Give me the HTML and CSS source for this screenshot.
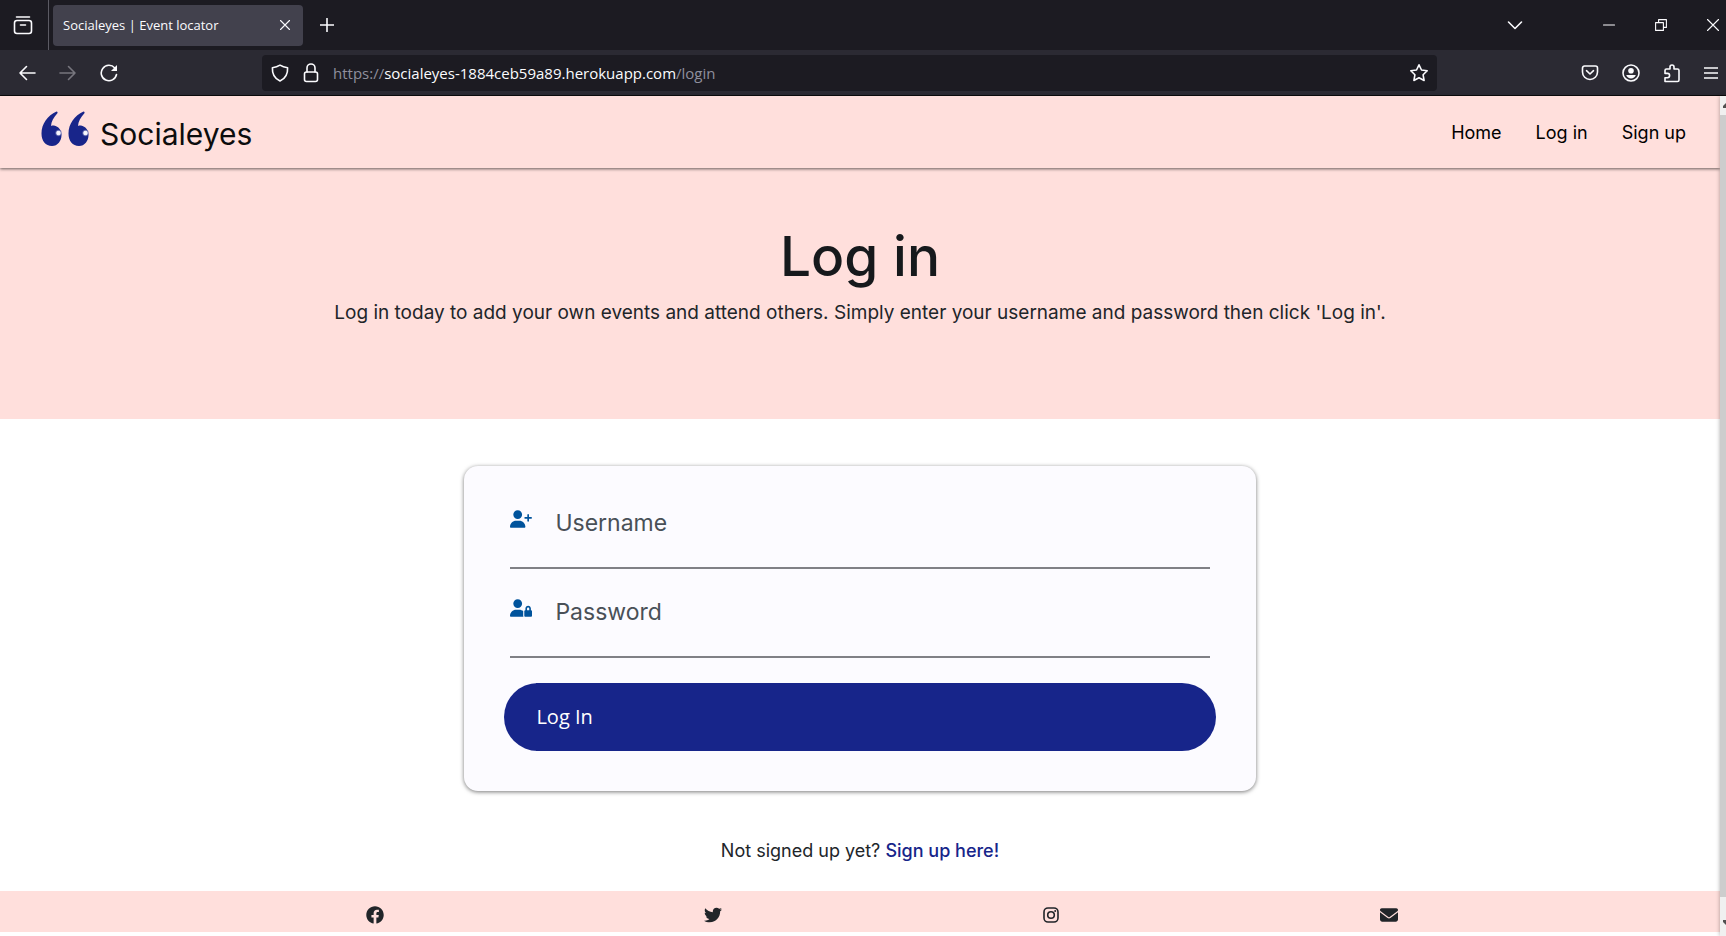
FILE: index.html
```html
<!DOCTYPE html>
<html lang="en">
<head>
<meta charset="utf-8">
<meta name="viewport" content="width=device-width, initial-scale=1">
<title>Socialeyes | Event locator</title>
<link rel="stylesheet" href="styles.css">
</head>
<body>
<div class="browser">
  <div class="tabstrip">
    <button class="chrome-btn view-btn" aria-label="Recent browsing">
      <svg width="20" height="20" viewBox="0 0 20 20"><rect x="1.5" y="5.5" width="17" height="13" rx="2.5"/><path d="M3.5 2h13M7.5 10h5"/></svg>
    </button>
    <div class="tab">
      <span class="tab-title">Socialeyes | Event locator</span>
      <button class="chrome-btn tab-close" aria-label="Close tab"><svg width="12" height="12" viewBox="0 0 12 12"><path class="thin" d="M1.5 1.5l9 9M10.500 1.5l-9 9"/></svg></button>
    </div>
    <button class="chrome-btn new-tab" aria-label="New tab"><svg width="14" height="14" viewBox="0 0 14 14"><path d="M7 .5v13M.5 7h13"/></svg></button>
    <div class="window-tools">
      <button class="chrome-btn list-btn" aria-label="List all tabs"><svg width="16" height="16" viewBox="0 0 16 16"><path d="M1.500 5l6.500 6.500L14.500 5"/></svg></button>
      <button class="chrome-btn win-btn" aria-label="Minimize"><svg width="12" height="12" viewBox="0 0 12 12"><path class="thin" d="M.5 6h11"/></svg></button>
      <button class="chrome-btn win-btn" aria-label="Restore"><svg width="12" height="12" viewBox="0 0 12 12"><path class="thin" d="M.6 3.600h7.800v7.800H.6zM3.600 3.600V.6h7.800v7.800h-3"/></svg></button>
      <button class="chrome-btn win-btn" aria-label="Close window"><svg width="12" height="12" viewBox="0 0 12 12"><path class="thin" d="M.5.5l11 11M11.500.5l-11 11"/></svg></button>
    </div>
  </div>
  <div class="toolbar">
    <div class="nav-tools">
      <button class="chrome-btn" aria-label="Back"><svg width="18" height="18" viewBox="0 0 18 18"><path d="M17 9H2M8.500 2.500L2 9l6.500 6.500"/></svg></button>
      <button class="chrome-btn dim" aria-label="Forward"><svg width="18" height="18" viewBox="0 0 18 18"><path d="M1 9h15M9.500 2.500L16 9l-6.500 6.500"/></svg></button>
      <button class="chrome-btn" aria-label="Reload"><svg width="18" height="18" viewBox="0 0 18 18"><path d="M16.500 10.500A7.700 7.700 0 1 1 14.800 4"/><path class="solid" d="M17 1v6h-6z"/></svg></button>
    </div>
    <div class="urlbar">
      <svg width="18" height="18" viewBox="0 0 18 18"><path d="M9 1.200c2.300 1.500 4.800 2.200 7.600 2.500C16.900 9.500 14.500 14.500 9 17 3.500 14.500 1.100 9.500 1.400 3.700 4.200 3.400 6.700 2.700 9 1.200z"/></svg>
      <svg width="18" height="20" viewBox="0 0 18 20"><rect x="2.500" y="9" width="13" height="9.500" rx="2"/><path d="M5 9V5a4 4 0 0 1 8 0v4"/></svg>
      <div class="url" role="textbox" aria-label="Address" tabindex="0">https://<span class="host">socialeyes-1884ceb59a89.herokuapp.com</span>/login</div>
      <button class="chrome-btn star" aria-label="Bookmark this page"><svg width="20" height="20" viewBox="0 0 20 20"><path d="M10 1.800l2.500 5.200 5.700.8-4.100 4 1 5.700-5.100-2.700-5.100 2.700 1-5.700-4.100-4 5.700-.8z"/></svg></button>
    </div>
    <div class="ext-tools">
      <button class="chrome-btn" aria-label="Save to Pocket"><svg width="18" height="18" viewBox="0 0 18 18"><path d="M3.500 2h11a2 2 0 0 1 2 2V8a7.500 7.500 0 0 1-15 0V4a2 2 0 0 1 2-2zM5.500 6.700L9 10l3.500-3.300"/></svg></button>
      <button class="chrome-btn" aria-label="Account"><svg width="18" height="18" viewBox="0 0 18 18"><circle cx="9" cy="9" r="8"/><circle class="solid" cx="9" cy="6.800" r="2.800"/><path class="solid" d="M4.200 11h9.600c-.7 2.200-2.700 3.500-4.800 3.500S4.900 13.200 4.200 11z"/></svg></button>
      <button class="chrome-btn" aria-label="Extensions"><svg width="18" height="20" viewBox="0 0 18 20"><path d="M2 18.500V14.800h2.400a2 2 0 0 0 0-4.400H2V7.500A1.500 1.500 0 0 1 3.500 6H7V4a2 2 0 0 1 4 0v2h3.500A1.500 1.500 0 0 1 16 7.500v9.500a1.500 1.500 0 0 1-1.500 1.500z"/></svg></button>
      <button class="chrome-btn" aria-label="Menu"><svg width="14" height="14" viewBox="0 0 14 14"><path d="M0 2h14M0 7h14M0 12h14"/></svg></button>
    </div>
  </div>
</div>

<div class="viewport">
  <div class="page">
    <header class="site-header">
      <a class="brand" href="#">
        <svg class="brand-mark" width="48" height="36" viewBox="0 0 48 36" aria-hidden="true">
          <defs><radialGradient id="glint"><stop offset="0" stop-color="#fff"/><stop offset=".45" stop-color="#f0effa"/><stop offset="1" stop-color="#18258a" stop-opacity="0"/></radialGradient></defs>
          <g id="quote"><path fill="#18258a" d="M15.500.5c1.200.3 1.400 1.200.7 2-3.500 4-6 8-6.200 12.500 1.100-.5 2-.6 3-.4 4.500.8 7.500 4.600 7.500 9.400C20.500 30 16.700 35 11 35 4.500 35 .5 30 .5 22.500.5 13 6.500 4.500 15.500.5z"/><circle cx="17.500" cy="22" r="4" fill="url(#glint)"/></g>
          <use href="#quote" x="27"/>
        </svg>
        <span class="brand-name">Socialeyes</span>
      </a>
      <nav class="site-nav"><a href="#">Home</a><a href="#">Log in</a><a href="#">Sign up</a></nav>
    </header>
    <section class="hero">
      <h1>Log in</h1>
      <p>Log in today to add your own events and attend others. Simply enter your username and password then click 'Log in'.</p>
    </section>
    <main class="main">
      <form class="card">
        <div class="field">
          <label for="username" aria-label="Username"><svg width="22" height="18" viewBox="0 0 640 512"><path d="M96 128a128 128 0 1 1 256 0A128 128 0 1 1 96 128zM0 482.300C0 383.800 79.800 304 178.300 304h91.400C368.200 304 448 383.800 448 482.300c0 16.400-13.300 29.700-29.700 29.700H29.700C13.300 512 0 498.700 0 482.300zM504 312V248H440c-13.300 0-24-10.700-24-24s10.700-24 24-24h64V136c0-13.300 10.700-24 24-24s24 10.700 24 24v64h64c13.300 0 24 10.700 24 24s-10.700 24-24 24H552v64c0 13.300-10.700 24-24 24s-24-10.700-24-24z"/></svg></label>
          <input id="username" type="text" placeholder="Username">
        </div>
        <div class="field">
          <label for="password" aria-label="Password"><svg width="22" height="18" viewBox="0 0 640 512"><path d="M224 256A128 128 0 1 0 224 0a128 128 0 1 0 0 256zm-45.700 48C79.800 304 0 383.800 0 482.300C0 498.700 13.300 512 29.700 512H392.600c-5.400-9.400-8.600-20.300-8.600-32V352c0-2.100 .1-4.200 .3-6.300c-31-26-71-41.600-114.600-41.600H178.300zM528 240c17.700 0 32 14.300 32 32v48H496V272c0-17.700 14.300-32 32-32zm-80 32v48c-17.700 0-32 14.300-32 32V480c0 17.700 14.300 32 32 32H608c17.700 0 32-14.300 32-32V352c0-17.700-14.300-32-32-32V272c0-44.200-35.800-80-80-80s-80 35.800-80 80z"/></svg></label>
          <input id="password" type="password" placeholder="Password">
        </div>
        <button class="submit" type="submit">Log In</button>
      </form>
      <p class="signup">Not signed up yet? <a href="#">Sign up here!</a></p>
    </main>
    <footer class="site-footer">
      <a href="#" aria-label="Facebook"><svg width="18" height="18" viewBox="0 0 512 512"><path d="M504 256C504 119 393 8 256 8S8 119 8 256c0 123.780 90.690 226.380 209.250 245V327.690h-63V256h63v-54.640c0-62.150 37-96.480 93.670-96.480 27.140 0 55.520 4.840 55.520 4.840v61h-31.280c-30.800 0-40.410 19.120-40.410 38.730V256h68.780l-11 71.690h-57.780V501C413.310 482.380 504 379.780 504 256z"/></svg></a>
      <a href="#" aria-label="Twitter"><svg width="18" height="18" viewBox="0 0 512 512"><path d="M459.370 151.716c.325 4.548.325 9.097.325 13.645 0 138.720-105.583 298.558-298.558 298.558-59.452 0-114.680-17.219-161.137-47.106 8.447.974 16.568 1.299 25.340 1.299 49.055 0 94.213-16.568 130.274-44.832-46.132-.975-84.792-31.188-98.112-72.772 6.498.974 12.995 1.624 19.818 1.624 9.421 0 18.843-1.300 27.614-3.573-48.081-9.747-84.143-51.980-84.143-102.985v-1.299c13.969 7.797 30.214 12.670 47.431 13.319-28.264-18.843-46.781-51.005-46.781-87.391 0-19.492 5.197-37.360 14.294-52.954 51.655 63.675 129.300 105.258 216.365 109.807-1.624-7.797-2.599-15.918-2.599-24.040 0-57.828 46.782-104.934 104.934-104.934 30.213 0 57.502 12.670 76.670 33.137 23.715-4.548 46.456-13.320 66.599-25.340-7.798 24.366-24.366 44.833-46.132 57.827 21.117-2.273 41.584-8.122 60.426-16.243-14.292 20.791-32.161 39.308-52.628 54.253z"/></svg></a>
      <a href="#" aria-label="Instagram"><svg width="18" height="18" viewBox="0 0 18 18"><rect class="line" x="2" y="2" width="14" height="14" rx="4"/><circle class="line" cx="9" cy="9" r="3.300"/><circle cx="13.200" cy="4.900" r="1"/></svg></a>
      <a href="#" aria-label="Email"><svg width="18" height="18" viewBox="0 0 512 512"><path d="M48 64C21.500 64 0 85.500 0 112c0 15.100 7.100 29.300 19.200 38.400L236.800 313.600c11.400 8.500 27 8.500 38.400 0L492.800 150.400c12.100-9.100 19.200-23.300 19.200-38.400c0-26.500-21.500-48-48-48H48zM0 176V384c0 35.300 28.700 64 64 64H448c35.300 0 64-28.700 64-64V176L294.400 339.200c-22.800 17.100-54 17.100-76.800 0L0 176z"/></svg></a>
    </footer>
  </div>
  <div class="scrollbar" aria-hidden="true">
    <div class="scroll-arrow"><svg width="3" height="5" viewBox="0 0 3 5"><path d="M3 0v5H0V3z"/></svg></div>
    <div class="scroll-thumb"></div>
    <div class="scroll-arrow scroll-end"><svg width="3" height="5" viewBox="0 0 3 5"><path d="M0 0h3v5L0 2z"/></svg></div>
  </div>
</div>
</body>
</html>
```

FILE: styles.css
```css
* { box-sizing: border-box; }

body {
  margin: 0;
  height: 100vh;
  display: flex;
  flex-direction: column;
  overflow: hidden;
  background: #fff;
  color: #212529;
  font-family: Inter, "Open Sans", sans-serif;
}

a { color: inherit; text-decoration: none; }

/* Browser chrome */
.browser {
  flex: none;
  background: #2b2a33;
  border-bottom: 1px solid #0c0c0d;
  color: #fbfbfe;
  font-family: "Open Sans", sans-serif;
}

.chrome-btn {
  display: flex;
  align-items: center;
  justify-content: center;
  padding: 0;
  border: 0;
  background: none;
  color: inherit;
}

.browser svg {
  flex: none;
  fill: none;
  stroke: currentColor;
  stroke-width: 1.6;
  stroke-linecap: round;
  stroke-linejoin: round;
}
.browser .thin { stroke-width: 1.1; }
.browser .solid { fill: currentColor; stroke: none; }
.browser .dim { color: #77767e; }

.tabstrip {
  display: flex;
  align-items: center;
  height: 50px;
  background: #1c1b22;
}
.view-btn {
  width: 49px;
  height: 50px;
  border-right: 1px solid #5b5a63;
  padding-right: 3px;
}
.tab {
  display: flex;
  align-items: center;
  justify-content: space-between;
  width: 250px;
  height: 41px;
  margin-left: 4px;
  padding: 0 12px 0 10px;
  border-radius: 4px;
  background: #42414d;
  font-size: 13px;
}
.new-tab { width: 48px; height: 40px; }
.window-tools { display: flex; align-items: center; margin-left: auto; }
.list-btn { width: 48px; height: 40px; margin-right: 44px; }
.win-btn { width: 52px; height: 40px; }
.win-btn:last-child { width: 51px; margin-right: -12px; }

.toolbar {
  display: flex;
  align-items: center;
  height: 45px;
  padding: 0 6px;
}
.nav-tools, .ext-tools { display: flex; }
.nav-tools .chrome-btn, .ext-tools .chrome-btn { width: 41px; height: 36px; }
.ext-tools .chrome-btn:last-child { width: 38px; margin-right: -10px; }
.urlbar {
  flex: 1;
  display: flex;
  align-items: center;
  gap: 13px;
  height: 36px;
  margin: 0 132px 0 133px;
  padding: 0 8px 0 9px;
  border-radius: 4px;
  background: #1c1b22;
}
.url { flex: 1; font-size: 15px; color: #8f8f9d; outline: 0; }
.host { color: #fbfbfe; }

/* Page */
.viewport { flex: 1; display: flex; min-height: 0; }
.page { flex: 1; min-width: 0; }

.site-header {
  display: flex;
  justify-content: space-between;
  height: 72px;
  padding: 0 34px 0 41px;
  background: #ffdfdc;
  box-shadow: 0 1px 3px #0009;
  position: relative;
}
.brand { display: flex; align-items: flex-start; gap: 11px; padding-top: 15px; }
.brand-name { font-size: 30px; line-height: 46px; color: #0c0c0d; }
.site-nav { display: flex; gap: 34px; font-size: 18px; line-height: 74px; color: #000; }

.hero {
  height: 251px;
  padding-top: 56px;
  background: #ffdfdc;
  text-align: center;
}
.hero h1 {
  margin: 0;
  font-size: 55px;
  line-height: 64px;
  font-weight: 500;
  color: #16191c;
}
.hero p { margin: 11px 0 0; font-size: 19px; line-height: 28px; }

.main { display: flex; flex-direction: column; align-items: center; padding-top: 47px; }
.card {
  width: 46%;
  padding: 28px 40px 40px;
  border-radius: 14px;
  background: #fcfbff;
  box-shadow: 0 1px 4px #0008;
}
.field {
  display: flex;
  align-items: flex-start;
  height: 75px;
  margin: 0 6px 14px;
  border-bottom: 2px solid #808086;
}
.field label { width: 45px; padding-top: 16px; line-height: 0; color: #00539c; }
.field svg { fill: currentColor; }
.field input {
  flex: 1;
  min-width: 0;
  height: 58px;
  padding: 0;
  border: 0;
  outline: 0;
  background: none;
  font: 23px/32px Inter, sans-serif;
}
.field input::placeholder { color: #495057; opacity: 1; }
.submit {
  display: block;
  width: 100%;
  height: 68px;
  margin-top: 25px;
  padding: 0 32px;
  border: 0;
  border-radius: 34px;
  background: #17258a;
  color: #fff;
  font: 20px/28px "Open Sans", sans-serif;
  text-align: left;
}
.signup { margin: 46px 0 26px; font-size: 18px; line-height: 28px; }
.signup a { color: #17258a; font-weight: 500; }

.site-footer {
  display: grid;
  grid-template-columns: repeat(4, 1fr);
  justify-items: center;
  align-items: center;
  height: 41px;
  padding: 6px 9.4% 0 12%;
  background: #ffdfdc;
}
.site-footer a { display: flex; }
.site-footer svg { fill: #212529; }
.site-footer .line { fill: none; stroke: #212529; stroke-width: 1.6; }

.scrollbar {
  display: flex;
  flex-direction: column;
  width: 6px;
  background: #f0f0f0;
  box-shadow: 0 0 4px #0005;
  position: relative;
}
.scroll-arrow { display: flex; align-items: center; justify-content: flex-end; height: 19px; }
.scroll-arrow svg { fill: #505050; }
.scroll-thumb { flex: 1; background: #cdcdcd; }
.scroll-end { height: 39px; padding-top: 12px; }
```
